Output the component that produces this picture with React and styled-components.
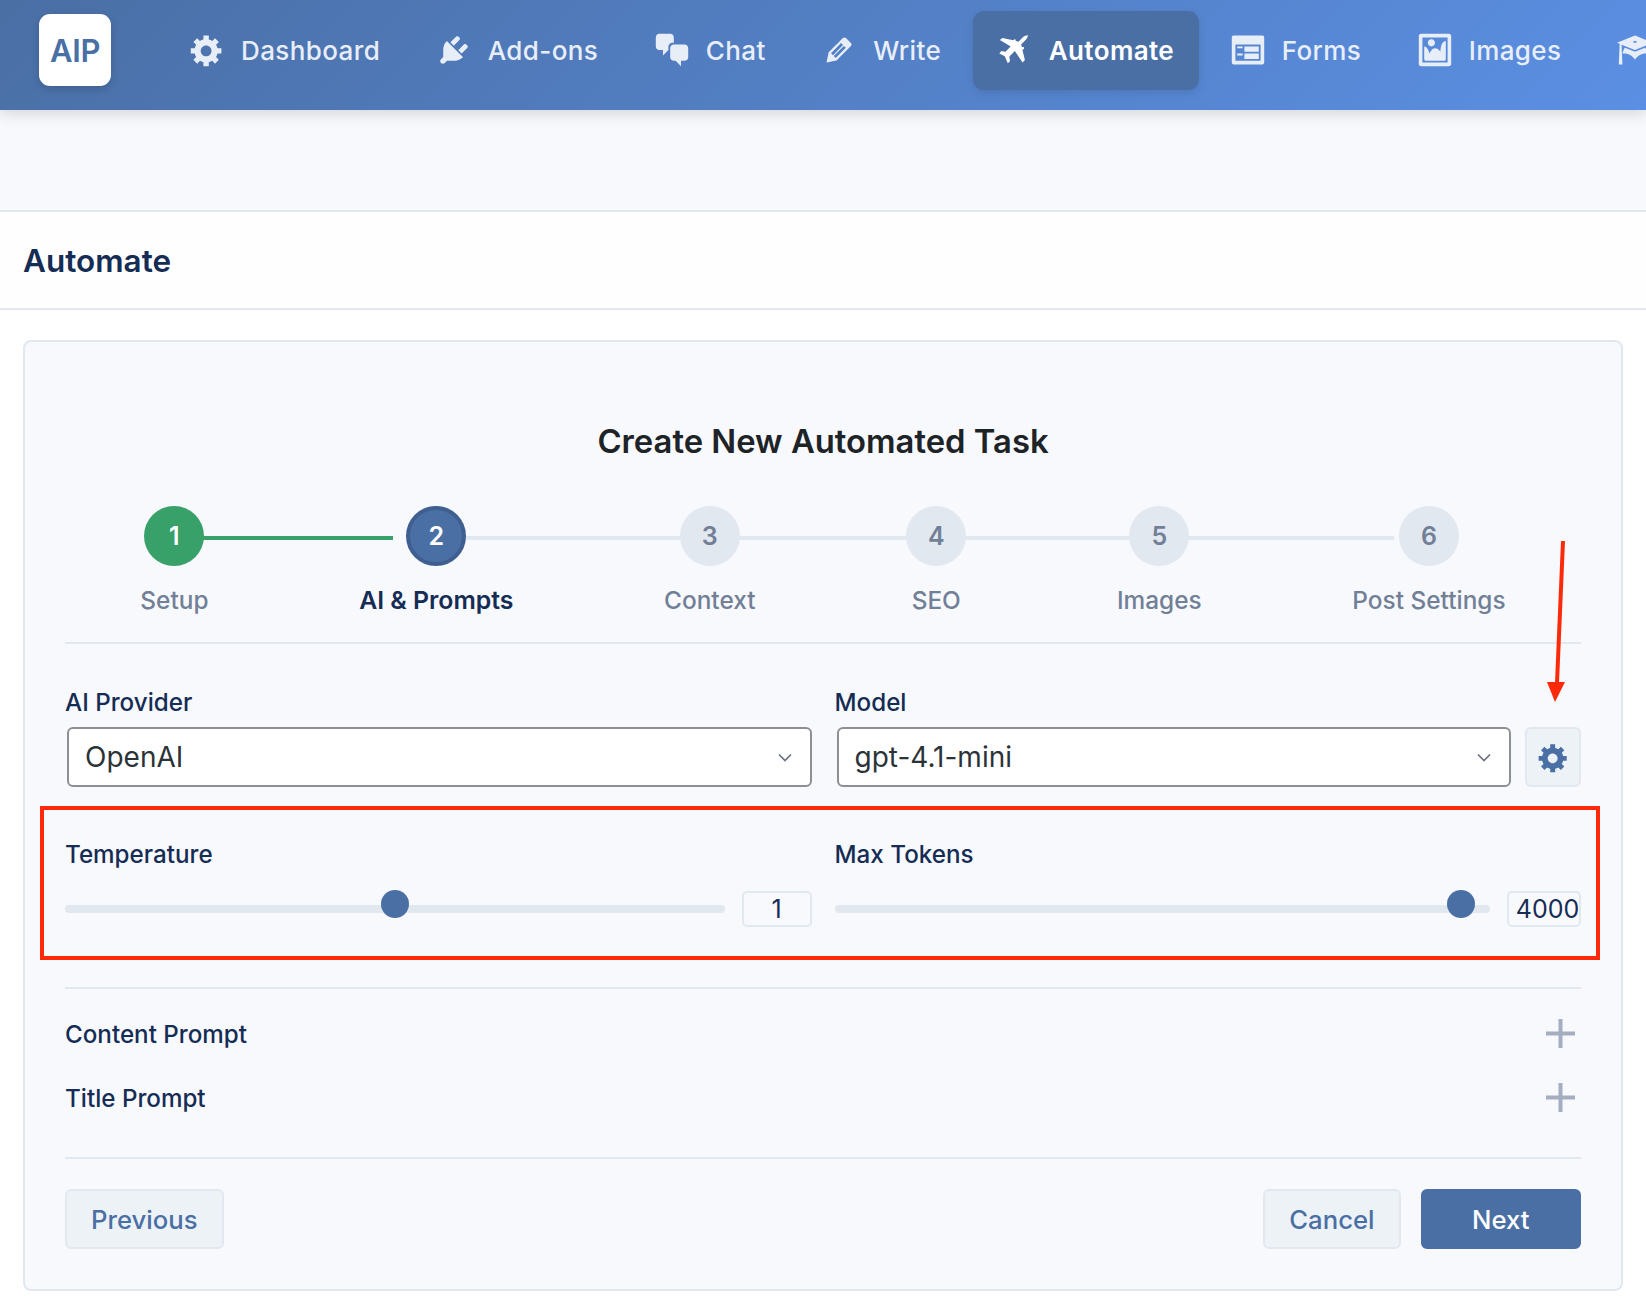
import React from "react";
import styled, { createGlobalStyle } from "styled-components";

const GlobalStyle = createGlobalStyle`
  * { box-sizing: border-box; }
  html, body { margin: 0; padding: 0; background: #fff; }
  body { font-family: Inter, "Noto Sans", "Liberation Sans", sans-serif; overflow: hidden; }
`;

const ICONS = {
  gear: "M18 12h-2.18c-.17.7-.44 1.35-.81 1.93l1.54 1.54-2.1 2.1-1.54-1.54c-.58.36-1.23.63-1.91.79V19H8v-2.18c-.68-.16-1.33-.43-1.91-.79l-1.54 1.54-2.12-2.12 1.54-1.54c-.36-.58-.63-1.23-.79-1.91H1V9.03h2.17c.16-.7.44-1.35.8-1.94L2.43 5.55l2.1-2.1 1.54 1.54c.58-.37 1.24-.64 1.93-.81V2h3v2.18c.68.16 1.33.43 1.91.79l1.54-1.54 2.12 2.12-1.54 1.54c.36.59.64 1.24.8 1.94H18V12zm-8.5 1.5c1.66 0 3-1.34 3-3s-1.34-3-3-3-3 1.34-3 3 1.34 3 3 3z",
  plug: "M13.11 4.36L9.87 7.6 8 5.73l3.24-3.24c.35-.34 1.05-.2 1.56.32.52.51.66 1.21.31 1.55zm-8 1.77l.91-1.12 9.01 9.01-1.19.84c-.71.71-2.63 1.16-3.82 1.16H6.14L4.9 17.26c-.59.59-1.54.59-2.12 0-.59-.58-.59-1.53 0-2.12l1.24-1.24v-3.88c0-1.13.4-3.19 1.09-3.89zm7.26 3.97l3.24-3.24c.34-.35 1.04-.21 1.55.31.52.51.66 1.21.31 1.55l-3.24 3.25z",
  chat: "M11 6h-.82C9.07 6 8 7.2 8 8.16V10l-3 3v-3H3c-1.1 0-2-.9-2-2V3c0-1.1.9-2 2-2h6c1.1 0 2 .9 2 2v3zm0 1h6c1.1 0 2 .9 2 2v5c0 1.1-.9 2-2 2h-2v3l-3-3h-1c-1.1 0-2-.9-2-2V9c0-1.1.9-2 2-2z",
  pencil: "M13.89 3.39l2.71 2.72c.46.46.42 1.24.03 1.64l-8.01 8.02-5.56 1.16 1.16-5.58s7.6-7.63 7.99-8.03c.39-.39 1.22-.39 1.68.07zm-2.73 2.79l-5.59 5.61 1.11 1.11 5.54-5.65zm-2.97 8.23l5.58-5.6-1.07-1.08-5.59 5.6z",
  plane: "M17.5 2.3c-.7-.7-2-.4-3.1.6L11.9 5.4 10.5 5l-.4-1.1-1 .6-.1.1L3 3.3 1.6 4.5l6 3.6L4.7 11 2.4 10.6 1.3 11.9l3 1.6 1.7 3.9 1.2-1.2-.3-2.6 3-3 4.3 6.4 1.3-1.4-1.4-5.8.9-.3-.1-1.2-1.1.1-.4-1.5 2.6-2.6c1-1 1.4-2.3.8-3z",
  forms: "M2 2h16c.55 0 1 .45 1 1v14c0 .55-.45 1-1 1H2c-.55 0-1-.45-1-1V3c0-.55.45-1 1-1zm15 14V7H3v9h14zM4 8v1h3V8H4zm4 0v3h8V8H8zm-4 4v1h3v-1H4zm4 0v3h8v-3H8z",
  image: "M2.25 1h15.5c.69 0 1.25.56 1.25 1.25v15.5c0 .69-.56 1.25-1.25 1.25H2.25C1.56 19 1 18.44 1 17.75V2.25C1 1.56 1.56 1 2.25 1zM17 17V3H3v14h14zM10 6c0-1.1-.9-2-2-2s-2 .9-2 2 .9 2 2 2 2-.9 2-2zm3 5s0-6 3-6v10c0 .55-.45 1-1 1H5c-.55 0-1-.45-1-1V8c2 0 3 4 3 4s1-3 3-3 3 2 3 2z",
  cap: "M10 10L2.54 7.02 3 18H1l.48-11.41L0 6l10-4 10 4zm0-5c-.55 0-1 .22-1 .5s.45.5 1 .5 1-.22 1-.5-.45-.5-1-.5zm0 6l5.57-2.23c.71.94 1.2 2.07 1.36 3.3-.3-.04-.61-.07-.93-.07-2.55 0-4.78 1.37-6 3.41C8.78 13.37 6.55 12 4 12c-.32 0-.63.03-.93.07.16-1.23.65-2.36 1.36-3.3z",
};

const Icon = ({ name, size }) => (
  <svg width={size} height={size} viewBox="0 0 20 20" fill="currentColor" fillRule="evenodd" style={{ flex: "none" }}>
    <path d={ICONS[name]} />
  </svg>
);

const Page = styled.div`
  position: relative;
  width: 1646px;
  height: 1306px;
  overflow: hidden;
  background: #fff;
`;

const Header = styled.header`
  position: relative;
  z-index: 2;
  display: flex;
  align-items: center;
  height: 110px;
  padding: 0 0 10px 39px;
  background: linear-gradient(135deg, #4a6fa5 0%, #5b8fe3 100%);
  box-shadow: 0 4px 14px rgba(0, 0, 0, 0.14);
  overflow: hidden;
`;

const Logo = styled.div`
  display: flex;
  flex: none;
  align-items: center;
  justify-content: center;
  width: 72px;
  height: 72px;
  border-radius: 11px;
  background: #fff;
  color: #4a6fa5;
  font-size: 31px;
  font-weight: 600;
  letter-spacing: -0.3px;
  box-shadow: 0 3px 8px rgba(0, 0, 0, 0.16);
`;

const Nav = styled.nav`
  display: flex;
  align-items: center;
  gap: 6.5px;
  margin-left: 54px;
`;

const NavItem = styled.a`
  display: flex;
  flex: none;
  align-items: center;
  gap: 16px;
  height: 79px;
  padding: 0 25px 0 24px;
  border-radius: 11px;
  color: ${(p) => (p.$active ? "#fff" : "#e8eef8")};
  background: ${(p) => (p.$active ? "#4a6fa5" : "transparent")};
  box-shadow: ${(p) => (p.$active ? "0 3px 8px rgba(0,0,0,0.1)" : "none")};
  font-size: 26px;
  font-weight: ${(p) => (p.$active ? 600 : 500)};
  letter-spacing: 0.4px;
`;

const Notice = styled.div`
  height: 100px;
  background: #f8f9fd;
`;

const TitleBar = styled.div`
  display: flex;
  align-items: center;
  height: 100px;
  padding-left: 23px;
  border-top: 2px solid #e2e8f0;
  border-bottom: 2px solid #e2e8f0;
  background: #fefefe;
`;

const PageTitle = styled.h1`
  margin: 0;
  color: #152c54;
  font-size: 31.5px;
  font-weight: 600;
`;

const Main = styled.main`
  padding: 30px 23px 0;
`;

const Card = styled.section`
  height: 951px;
  padding: 80px 40px 39px;
  border: 2px solid #e2e8f0;
  border-radius: 8px;
  background: #f8f9fd;
`;

const CardTitle = styled.h2`
  margin: 0 0 45px;
  color: #1d2327;
  font-size: 32.8px;
  font-weight: 600;
  line-height: 39px;
  text-align: center;
`;

const Steps = styled.div`
  display: flex;
  justify-content: space-around;
  padding-bottom: 27px;
  border-bottom: 2px solid #e2e8f0;
`;

const Step = styled.div`
  position: relative;
  display: flex;
  flex-direction: column;
  align-items: center;
  gap: 19px;

  &:not(:last-child)::after {
    content: "";
    position: absolute;
    top: 30px;
    left: 50%;
    width: calc(100% + 150px);
    height: 4px;
    background: ${(p) => (p.$state === "done" ? "#38a169" : "#e2e8f0")};
  }
`;

const STEP_BG = { done: "#38a169", active: "#4a6fa5", todo: "#e2e8f0" };

const StepDot = styled.div`
  position: relative;
  z-index: 1;
  display: flex;
  align-items: center;
  justify-content: center;
  width: 60px;
  height: 60px;
  border-radius: 50%;
  border: ${(p) => (p.$state === "active" ? "4px solid #3f5f91" : "none")};
  background: ${(p) => STEP_BG[p.$state]};
  color: ${(p) => (p.$state === "todo" ? "#718096" : "#fff")};
  font-size: 25px;
  font-weight: 600;
`;

const StepLabel = styled.div`
  color: ${(p) => (p.$state === "active" ? "#152c54" : "#718096")};
  font-size: ${(p) => (p.$state === "active" ? 24.8 : 24.4)}px;
  font-weight: ${(p) => (p.$state === "active" ? 600 : 500)};
  line-height: 30px;
  white-space: nowrap;
`;

const FieldGrid = styled.div`
  display: grid;
  grid-template-columns: 1fr 1fr;
  column-gap: 23px;
  row-gap: 52px;
  margin-top: 43px;
`;

const Field = styled.div`
  min-width: 0;
`;

const Label = styled.div`
  padding-top: 1px;
  color: #152c54;
  font-size: 24.2px;
  font-weight: 500;
  line-height: 30px;
`;

const SelectRow = styled.div`
  display: flex;
  gap: 14px;
  margin-top: 9px;
`;

const SelectBox = styled.div`
  display: flex;
  flex: 1;
  align-items: center;
  justify-content: space-between;
  height: 60px;
  margin-left: 2px;
  padding: 0 18px 0 16px;
  border: 2px solid #8c8f94;
  border-radius: 6px;
  background: #fff;
  color: #2c3338;
  font-size: 28px;
`;

const SquareButton = styled.button`
  display: flex;
  flex: none;
  align-items: center;
  justify-content: center;
  width: 56px;
  height: 60px;
  padding: 0;
  border: 2px solid #e2e8f0;
  border-radius: 6px;
  background: #edf2f7;
  color: #4a6fa5;
`;

const SliderRow = styled.div`
  display: flex;
  align-items: center;
  gap: ${(p) => p.$gap}px;
  margin-top: 21px;
`;

const Range = styled.input.attrs({ type: "range" })`
  flex: 1;
  min-width: 0;
  height: 8px;
  margin: 0;
  border-radius: 4px;
  background: #e2e8f0;
  appearance: none;

  &::-webkit-slider-runnable-track {
    height: 8px;
    background: transparent;
  }

  &::-webkit-slider-thumb {
    width: 28px;
    height: 28px;
    margin-top: -15px;
    border: none;
    border-radius: 50%;
    background: #4a6fa5;
    appearance: none;
  }
`;

const ValueBox = styled.div`
  display: flex;
  flex: none;
  align-items: center;
  justify-content: center;
  width: ${(p) => p.$width}px;
  height: 36px;
  padding-left: ${(p) => p.$shift || 0}px;
  border: 2px solid #e2e8f0;
  border-radius: 5px;
  color: #152c54;
  font-size: 25px;
`;

const Divider = styled.hr`
  height: 2px;
  margin: ${(p) => p.$top}px 0 0;
  border: none;
  background: #e2e8f0;
`;

const Accordion = styled.div`
  padding: 13px 0 27px;
`;

const AccordionRow = styled.div`
  display: flex;
  align-items: center;
  justify-content: space-between;
  height: 64px;
  padding-right: 6px;
`;

const PlusSvg = styled.svg`
  margin-bottom: 2px;
`;

const PlusIcon = () => (
  <PlusSvg width="29" height="29" viewBox="0 0 29 29" fill="#a3aec0">
    <rect x="0" y="12.5" width="29" height="4" />
    <rect x="12.5" y="0" width="4" height="29" />
  </PlusSvg>
);

const Footer = styled.div`
  display: flex;
  justify-content: space-between;
  margin-top: 30px;
`;

const FooterRight = styled.div`
  display: flex;
  gap: 20px;
`;

const Button = styled.button`
  height: 60px;
  padding: 0 ${(p) => (p.$primary ? 49.5 : 24)}px;
  border: 2px solid ${(p) => (p.$primary ? "#4a6fa5" : "#e2e8f0")};
  border-radius: 6px;
  background: ${(p) => (p.$primary ? "#4a6fa5" : "#edf2f7")};
  color: ${(p) => (p.$primary ? "#fff" : "#4a6fa5")};
  font-family: inherit;
  font-size: 25.7px;
  font-weight: 500;
`;

/* red markup drawn over the screenshot */
const RedBox = styled.div`
  position: absolute;
  top: 806px;
  left: 40px;
  width: 1560px;
  height: 154px;
  border: 4px solid #fb2a0b;
`;

const RedArrow = styled.svg`
  position: absolute;
  top: 541px;
  left: 1540px;
`;

const Chevron = () => (
  <svg width="14" height="9" viewBox="0 0 14 9" fill="none" stroke="#6b7280" strokeWidth="1.7">
    <path d="M1 1.5l6 6 6-6" />
  </svg>
);

const navItems = [
  ["gear", "Dashboard"],
  ["plug", "Add-ons"],
  ["chat", "Chat"],
  ["pencil", "Write"],
  ["plane", "Automate", true],
  ["forms", "Forms"],
  ["image", "Images"],
  ["cap", ""],
];

const steps = [
  ["1", "Setup", "done"],
  ["2", "AI & Prompts", "active"],
  ["3", "Context", "todo"],
  ["4", "SEO", "todo"],
  ["5", "Images", "todo"],
  ["6", "Post Settings", "todo"],
];

export default function App() {
  return (
    <Page>
      <GlobalStyle />
      <Header>
        <Logo>AIP</Logo>
        <Nav>
          {navItems.map(([icon, text, active]) => (
            <NavItem key={icon} $active={active}>
              <Icon name={icon} size={36} />
              {text}
            </NavItem>
          ))}
        </Nav>
      </Header>
      <Notice />
      <TitleBar>
        <PageTitle>Automate</PageTitle>
      </TitleBar>
      <Main>
        <Card>
          <CardTitle>Create New Automated Task</CardTitle>
          <Steps>
            {steps.map(([num, text, state]) => (
              <Step key={num} $state={state}>
                <StepDot $state={state}>{num}</StepDot>
                <StepLabel $state={state}>{text}</StepLabel>
              </Step>
            ))}
          </Steps>
          <FieldGrid>
            <Field>
              <Label>AI Provider</Label>
              <SelectRow>
                <SelectBox>
                  OpenAI
                  <Chevron />
                </SelectBox>
              </SelectRow>
            </Field>
            <Field>
              <Label>Model</Label>
              <SelectRow>
                <SelectBox>
                  gpt-4.1-mini
                  <Chevron />
                </SelectBox>
                <SquareButton>
                  <Icon name="gear" size={33} />
                </SquareButton>
              </SelectRow>
            </Field>
            <Field>
              <Label>Temperature</Label>
              <SliderRow $gap={17}>
                <Range min="0" max="2" step="0.1" defaultValue="1" />
                <ValueBox $width={70}>1</ValueBox>
              </SliderRow>
            </Field>
            <Field>
              <Label>Max Tokens</Label>
              <SliderRow $gap={17}>
                <Range min="0" max="4096" defaultValue="4000" />
                <ValueBox $width={74} $shift={7}>4000</ValueBox>
              </SliderRow>
            </Field>
          </FieldGrid>
          <Divider $top={60} />
          <Accordion>
            <AccordionRow>
              <Label>Content Prompt</Label>
              <PlusIcon />
            </AccordionRow>
            <AccordionRow>
              <Label>Title Prompt</Label>
              <PlusIcon />
            </AccordionRow>
          </Accordion>
          <Divider $top={0} />
          <Footer>
            <Button>Previous</Button>
            <FooterRight>
              <Button>Cancel</Button>
              <Button $primary>Next</Button>
            </FooterRight>
          </Footer>
        </Card>
      </Main>
      <RedBox />
      <RedArrow width="30" height="162" viewBox="0 0 30 162">
        <path d="M23 0L17 142" stroke="#fb2a0b" strokeWidth="4" fill="none" />
        <path d="M7 141L25 141 15 161z" fill="#fb2a0b" />
      </RedArrow>
    </Page>
  );
}
